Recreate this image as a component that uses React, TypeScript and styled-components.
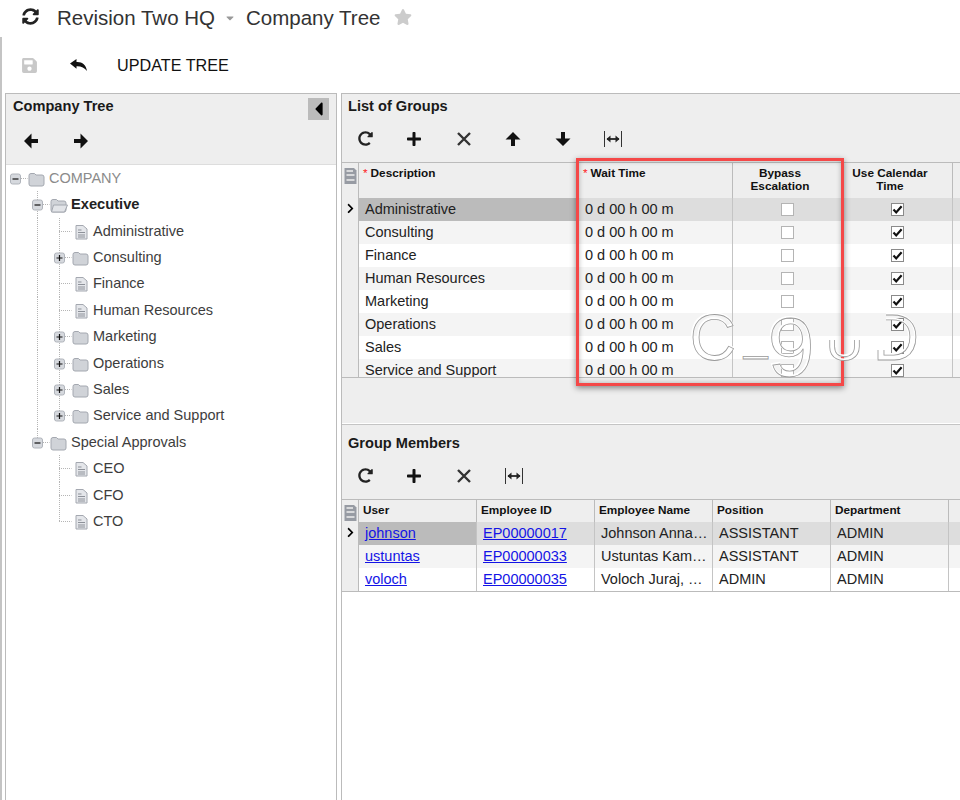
import React from "react";
import styled, { createGlobalStyle } from "styled-components";
import { FaCaretDown, FaCaretLeft, FaChevronRight, FaPlus, FaRedoAlt, FaSave, FaStar, FaSyncAlt } from "react-icons/fa";

const Global = createGlobalStyle`
  html, body { margin: 0; padding: 0; background: #fff; }
  * { box-sizing: border-box; }
  body { font-family: "Liberation Sans", Arial, sans-serif; color: #222; }
`;

const Page = styled.div`
  position: relative; width: 960px; height: 800px; overflow: hidden;
  display: flex; flex-direction: column;
`;
const TitleBar = styled.header`
  height: 37px; display: flex; align-items: center; padding: 0 0 2px 22px;
  font-size: 20.5px; color: #333;
`;
const TitleIcon = styled.span<{ $w: number; $c: string; $ml: number; $up?: number }>`
  display: flex; align-items: center; width: ${p => p.$w}px; margin-left: ${p => p.$ml}px; color: ${p => p.$c};
  margin-bottom: ${p => p.$up || 0}px;
`;
const TitleText = styled.span<{ $ml: number }>` margin-left: ${p => p.$ml}px; white-space: nowrap; `;
const Body = styled.div`
  flex: 1; min-height: 0; display: flex; flex-direction: column; border-left: 2px solid #c4c4c4;
`;
const MainToolbar = styled.div`
  height: 56px; display: flex; align-items: center; padding-left: 19px; flex: none;
`;
const MainTool = styled.span<{ $w: number; $c?: string }>`
  width: ${p => p.$w}px; display: flex; align-items: center; color: ${p => p.$c || "#111"}; font-size: 16.2px; white-space: nowrap;
`;
const Panels = styled.div`
  flex: 1; min-height: 0; display: flex; padding-left: 3px; gap: 4px;
`;
const LeftPanel = styled.aside`
  width: 332px; flex: none; border: 1px solid #bbb; border-bottom: 0; display: flex; flex-direction: column;
`;
const RightPanel = styled.main`
  flex: 1; min-width: 0; border-left: 1px solid #bbb; border-top: 1px solid #bbb; display: flex; flex-direction: column;
`;
const TreeHead = styled.div`
  height: 71px; flex: none; background: #eee; border-bottom: 1px solid #ddd; padding: 4px 7px 0 7px;
`;
const PanelTop = styled.div` display: flex; justify-content: space-between; align-items: flex-start; `;
const PanelTitle = styled.h2`
  margin: 0; font-size: 14.6px; line-height: 17px; font-weight: bold; color: #1a1a1a;
`;
const Collapse = styled.button`
  width: 21px; height: 22px; border: 0; padding: 0; background: #bbb; color: #000; display: flex;
  align-items: center; justify-content: center; font-size: 22px;
`;
const TreeTools = styled.div` display: flex; gap: 34px; padding: 13px 0 0 10px; `;
const Tree = styled.div` display: grid; grid-auto-rows: 26.4px; margin-top: -0.2px; `;
const TreeRow = styled.div<{ $muted?: boolean; $bold?: boolean }>`
  display: flex; align-items: flex-start; height: 26.4px; line-height: 26.4px; white-space: nowrap;
  font-size: ${p => (p.$bold ? "14.67px" : "14.5px")};
  color: ${p => (p.$muted ? "#8b8b8b" : p.$bold ? "#222" : "#3d3d3d")}; font-weight: ${p => (p.$bold ? "bold" : "normal")};
`;
const Guide = styled.svg` flex: none; display: block; overflow: visible; `;
const Section = styled.section` background: #eee; `;
const SectionHead = styled.div<{ $pt: number }>` padding: ${p => p.$pt}px 7px 0 6px; `;
const GridTools = styled.div<{ $h: number }>`
  display: flex; align-items: center; gap: 33.4px; padding-left: 16px; height: ${p => p.$h}px; font-size: 15px; color: #222;
`;
const PlusIcon = styled(FaPlus)` font-size: 16px; color: #111; `;
const GridWrap = styled.div<{ $clip?: number }>`
  border-top: 1px solid #bbb; border-bottom: 1px solid #bbb; background: #fff;
  ${p => (p.$clip ? `height: ${p.$clip}px; overflow: hidden;` : "")}
`;
const Row = styled.div<{ $cols: string; $h: number; $bg: string }>`
  display: grid; grid-template-columns: ${p => p.$cols}; height: ${p => p.$h}px; background: ${p => p.$bg};
`;
const Head = styled.div<{ $center?: boolean }>`
  border-right: 1px solid #bbb; padding: 4px; font-size: 11.8px; line-height: 13px; font-weight: bold; color: #111;
  ${p => (p.$center ? "text-align: center; padding-right: 19px;" : "")}
`;
const HeadBlank = styled.div``;
const Req = styled.span` color: #f22; font-weight: normal; margin-right: 3px; `;
const Gutter = styled.div`
  background: #eee; border-right: 1px solid #bbb; display: flex; align-items: center; justify-content: center;
  padding-bottom: 3px; font-size: 11px; color: #000;
`;
const GutterHead = styled(Gutter)` align-items: flex-start; padding: 5px 0 0; `;
const Cell = styled.div<{ $sel?: boolean; $center?: boolean }>`
  border-right: 1px solid #c4c4c4; padding: 0 0 0 6px; font-size: 14.5px; line-height: 22px; white-space: nowrap; overflow: hidden; color: #222;
  ${p => (p.$sel ? "background: #bbb;" : "")}
  ${p => (p.$center ? "display: flex; align-items: center; justify-content: center; padding: 0 0 1px;" : "")}
`;
const BlankCell = styled.div``;
const Link = styled.a` color: #1414e6; text-decoration: underline; `;
const Box = styled.span<{ $on?: boolean }>`
  width: 13px; height: 13px; border: 1px solid ${p => (p.$on ? "#8a8a8a" : "#b4b4b4")}; background: #fff; display: flex; align-items: center; justify-content: center;
`;
const Splitter = styled.div` height: 46px; background: #eee; border-bottom: 1px solid #fff; flex: none; `;
const MembersTop = styled.div` border-top: 1px solid #c4c4c4; `;
const Highlight = styled.div`
  position: absolute; left: 576px; top: 158px; width: 268px; height: 228px; border: 3px solid #f44848;
  box-shadow: 0 2px 6px rgba(0,0,0,.45), inset 0 0 5px rgba(0,0,0,.28); pointer-events: none;
`;
const Watermark = styled.svg` position: absolute; left: 680px; top: 295px; pointer-events: none; `;

const Check = () => (
  <svg width="11" height="11" viewBox="0 0 11 11"><path d="M1.5 5.5 L4.2 8.4 L9.6 2.2" fill="none" stroke="#111" strokeWidth="2.2" /></svg>
);
const Times = () => (
  <svg width="16" height="16" viewBox="0 0 16 16"><path d="M2 2 L14 14 M14 2 L2 14" stroke="#333" strokeWidth="2.4" /></svg>
);
const Fit = () => (
  <svg width="18" height="16" viewBox="0 0 18 16"><path d="M.5 0V16M17.5 0V16" stroke="#333" strokeWidth="1" /><path d="M3 8H15" stroke="#222" strokeWidth="1.8" /><path d="M6.5 4.5V11.5L2.5 8ZM11.5 4.5V11.5L15.5 8Z" fill="#222" /></svg>
);
const ColIcon = () => (
  <svg width="13" height="16" viewBox="0 0 13 16"><path d="M1 0H10L12.5 2.5V16H.5V0Z" fill="#979ba3" /><path d="M2.5 3H9M2.5 7H10.5M2.5 12H10.5" stroke="#eee" strokeWidth="1.6" /></svg>
);
const Arrow = ({ dir }: { dir: 0 | 90 | 180 | 270 }) => (
  <svg width="16" height="16" viewBox="0 0 16 16">
    <path transform={`rotate(${dir} 8 8)`} d="M8 1 L15.5 8.5 H10 V15 H6 V8.5 H.5 Z" fill="#111" />
  </svg>
);
const Undo = () => (
  <svg width="17" height="12" viewBox="0 0 17 12"><path d="M0 4.5 L6.5 0 V3 C12 2.6 16 5.5 17 12 C14.5 8.6 11 7 6.5 7.2 V9.8 Z" fill="#111" /></svg>
);

type Kind = "open" | "folder" | "doc";
type NodeT = { label: string; level: number; kind: Kind; toggle?: "minus" | "plus"; lines: number[]; half?: number; muted?: boolean; bold?: boolean };

const Folder = ({ x, open }: { x: number; open?: boolean }) => (
  <g transform={`translate(${x},7)`}>
    <path d="M.5 3.5 Q.5 1.5 2.5 1.5H6L7.5 3H13.5Q15.5 3 15.5 5V12Q15.5 14 13.5 14H2.5Q.5 14 .5 12Z" fill="#d0d3d8" stroke="#a4a8b0" />
    {open && <path d="M3 7H17L14 14H1Z" fill="#e2e4e8" stroke="#a4a8b0" />}
  </g>
);
const Doc = ({ x }: { x: number }) => (
  <g transform={`translate(${x},7)`}>
    <path d="M.5.5H7.5L11.5 4V14H.5Z" fill="#e4e6ea" stroke="#a4a8b0" />
    <path d="M2.5 5H6M2.5 7.5H9.5M2.5 10H9.5M2.5 12H9.5" stroke="#8d9199" />
  </g>
);
const TreeGlyph = ({ n }: { n: NodeT }) => {
  const tx = 9.5 + n.level * 22;
  const iconX = tx + 13;
  const width = 43 + n.level * 22;
  const dash = "1 1";
  return (
    <Guide width={width} height={27}>
      {n.lines.map(x => <path key={x} d={`M${x - 6}.5 0V27`} stroke="#b5b5b5" strokeDasharray={dash} />)}
      {n.half !== undefined && <path d={`M${n.half - 6}.5 0V13.5`} stroke="#b5b5b5" strokeDasharray={dash} />}
      <path d={`M${Math.floor(tx)} 13.5H${iconX - 1}`} stroke="#b5b5b5" strokeDasharray={dash} />
      {n.toggle && (
        <g>
          <rect x={tx - 5} y={9} width={10} height={10} rx={2} fill="#d6d9de" stroke="#b0b4bb" />
          <path d={n.toggle === "minus" ? `M${tx - 3} 14H${tx + 3}` : `M${tx - 3} 14H${tx + 3}M${tx} 11V17`} stroke="#111" strokeWidth="1.2" />
        </g>
      )}
      {n.kind === "open" && <Folder x={iconX} open />}
      {n.kind === "folder" && <Folder x={iconX} />}
      {n.kind === "doc" && <Doc x={iconX + 3} />}
    </Guide>
  );
};

const tree: NodeT[] = [
  { label: "COMPANY", level: 0, kind: "folder", toggle: "minus", lines: [], muted: true },
  { label: "Executive", level: 1, kind: "open", toggle: "minus", lines: [37], bold: true },
  { label: "Administrative", level: 2, kind: "doc", lines: [37, 59] },
  { label: "Consulting", level: 2, kind: "folder", toggle: "plus", lines: [37, 59] },
  { label: "Finance", level: 2, kind: "doc", lines: [37, 59] },
  { label: "Human Resources", level: 2, kind: "doc", lines: [37, 59] },
  { label: "Marketing", level: 2, kind: "folder", toggle: "plus", lines: [37, 59] },
  { label: "Operations", level: 2, kind: "folder", toggle: "plus", lines: [37, 59] },
  { label: "Sales", level: 2, kind: "folder", toggle: "plus", lines: [37, 59] },
  { label: "Service and Support", level: 2, kind: "folder", toggle: "plus", lines: [37], half: 59 },
  { label: "Special Approvals", level: 1, kind: "folder", toggle: "minus", lines: [], half: 37 },
  { label: "CEO", level: 2, kind: "doc", lines: [59] },
  { label: "CFO", level: 2, kind: "doc", lines: [59] },
  { label: "CTO", level: 2, kind: "doc", lines: [], half: 59 },
];

const groupCols = "17px 220px 154px 110px 110px 1fr";
const memberCols = "17px 118px 118px 118px 118px 118px 1fr";
const stripe = (i: number) => (i === 0 ? "#ddd" : i % 2 ? "#f4f4f4" : "#fff");

const groups = ["Administrative", "Consulting", "Finance", "Human Resources", "Marketing", "Operations", "Sales", "Service and Support"];
const members = [
  ["johnson", "EP00000017", "Johnson Anna…", "ASSISTANT", "ADMIN"],
  ["ustuntas", "EP00000033", "Ustuntas Kam…", "ASSISTANT", "ADMIN"],
  ["voloch", "EP00000035", "Voloch Juraj, …", "ADMIN", "ADMIN"],
];

const markLetters = [
  { ch: "C", x: 9, y: 64, size: 64 },
  { ch: "_", x: 63, y: 55, size: 43 },
  { ch: "9", x: 87, y: 80, size: 84 },
  { ch: "U", x: 145, y: 64, size: 52, clip: "markU" },
  { ch: "D", x: 192, y: 64, size: 64, clip: "markD" },
];

export default function App() {
  return (
    <Page>
      <Global />
      <TitleBar>
        <TitleIcon $w={18} $c="#222" $ml={0} $up={2}><FaSyncAlt size={17} /></TitleIcon>
        <TitleText $ml={17}>Revision Two HQ</TitleText>
        <TitleIcon $w={10} $c="#999" $ml={10}><FaCaretDown size={12} /></TitleIcon>
        <TitleText $ml={11}>Company Tree</TitleText>
        <TitleIcon $w={18} $c="#ccc" $ml={14} $up={1}><FaStar size={18} /></TitleIcon>
      </TitleBar>
      <Body>
        <MainToolbar>
          <MainTool $w={49} $c="#c8c8c8"><FaSave size={17} /></MainTool>
          <MainTool $w={47} $c="#111"><Undo /></MainTool>
          <MainTool $w={120}>UPDATE TREE</MainTool>
        </MainToolbar>
        <Panels>
          <LeftPanel>
            <TreeHead>
              <PanelTop>
                <PanelTitle>Company Tree</PanelTitle>
                <Collapse aria-label="Collapse"><FaCaretLeft /></Collapse>
              </PanelTop>
              <TreeTools><Arrow dir={270} /><Arrow dir={90} /></TreeTools>
            </TreeHead>
            <Tree>
              {tree.map(n => (
                <TreeRow key={n.label} $muted={n.muted} $bold={n.bold}>
                  <TreeGlyph n={n} />
                  {n.label}
                </TreeRow>
              ))}
            </Tree>
          </LeftPanel>
          <RightPanel>
            <Section>
              <SectionHead $pt={4}><PanelTitle>List of Groups</PanelTitle></SectionHead>
              <GridTools $h={47}>
                <FaRedoAlt /><PlusIcon /><Times /><Arrow dir={0} /><Arrow dir={180} /><Fit />
              </GridTools>
              <GridWrap $clip={216}>
                <Row $cols={groupCols} $h={35} $bg="#eee">
                  <GutterHead><ColIcon /></GutterHead>
                  <Head><Req>*</Req>Description</Head>
                  <Head><Req>*</Req>Wait Time</Head>
                  <Head $center>Bypass Escalation</Head>
                  <Head $center>Use Calendar Time</Head>
                  <HeadBlank />
                </Row>
                {groups.map((g, i) => (
                  <Row key={g} $cols={groupCols} $h={23} $bg={stripe(i)}>
                    <Gutter>{i === 0 && <FaChevronRight />}</Gutter>
                    <Cell $sel={i === 0}>{g}</Cell>
                    <Cell>0 d 00 h 00 m</Cell>
                    <Cell $center><Box /></Cell>
                    <Cell $center><Box $on><Check /></Box></Cell>
                    <BlankCell />
                  </Row>
                ))}
              </GridWrap>
              <Splitter />
            </Section>
            <MembersTop>
              <Section>
                <SectionHead $pt={10}><PanelTitle>Group Members</PanelTitle></SectionHead>
                <GridTools $h={47}>
                  <FaRedoAlt /><PlusIcon /><Times /><Fit />
                </GridTools>
              </Section>
              <GridWrap>
                <Row $cols={memberCols} $h={22} $bg="#eee">
                  <GutterHead><ColIcon /></GutterHead>
                  <Head>User</Head><Head>Employee ID</Head><Head>Employee Name</Head><Head>Position</Head><Head>Department</Head>
                  <HeadBlank />
                </Row>
                {members.map((m, i) => (
                  <Row key={m[0]} $cols={memberCols} $h={23} $bg={stripe(i)}>
                    <Gutter>{i === 0 && <FaChevronRight />}</Gutter>
                    <Cell $sel={i === 0}><Link href="#">{m[0]}</Link></Cell>
                    <Cell><Link href="#">{m[1]}</Link></Cell>
                    <Cell>{m[2]}</Cell><Cell>{m[3]}</Cell><Cell>{m[4]}</Cell>
                    <BlankCell />
                  </Row>
                ))}
              </GridWrap>
            </MembersTop>
          </RightPanel>
        </Panels>
      </Body>
      <Highlight />
      <Watermark width={260} height={110} aria-hidden>
        <defs>
          <clipPath id="markU"><rect x="140" y="45" width="50" height="30" /></clipPath>
          <clipPath id="markD"><rect x="206" y="0" width="50" height="80" /><rect x="197" y="55" width="20" height="20" /></clipPath>
        </defs>
        {markLetters.map(l => (
          <g key={l.ch} clipPath={l.clip ? `url(#${l.clip})` : undefined} fontFamily="Liberation Sans" fontSize={l.size} fill="none">
            <text x={l.x} y={l.y} stroke="#fff" strokeWidth="2.2">{l.ch}</text>
            <text x={l.x + 0.7} y={l.y + 0.7} stroke="#9a9a9a" strokeWidth="0.8">{l.ch}</text>
          </g>
        ))}
      </Watermark>
    </Page>
  );
}
